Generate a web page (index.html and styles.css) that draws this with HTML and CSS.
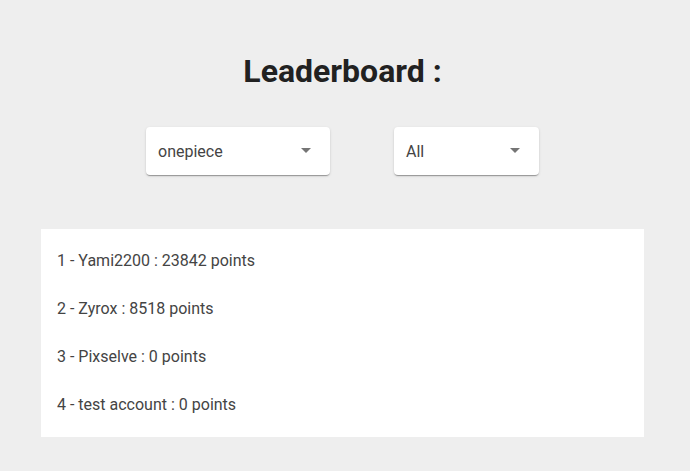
FILE: index.html
```html
<!DOCTYPE html>
<html>
<head>
<meta charset="utf-8">
<link rel="stylesheet" href="styles.css">
</head>
<body>
<div class="page">
  <h1 class="title">Leaderboard :</h1>
  <div class="filters">
    <div class="select select-anime">
      <span class="select-value">onepiece</span>
      <svg class="arrow" viewBox="0 0 24 24" width="24" height="24"><path d="M7 10l5 5 5-5z"/></svg>
    </div>
    <div class="select select-period">
      <span class="select-value">All</span>
      <svg class="arrow" viewBox="0 0 24 24" width="24" height="24"><path d="M7 10l5 5 5-5z"/></svg>
    </div>
  </div>
  <ul class="board">
    <li class="row">1 - Yami2200 : 23842 points</li>
    <li class="row">2 - Zyrox : 8518 points</li>
    <li class="row">3 - Pixselve : 0 points</li>
    <li class="row">4 - test account : 0 points</li>
  </ul>
</div>
</body>
</html>
```
FILE: styles.css
```css
html, body {
  margin: 0;
  padding: 0;
  background: #eeeeee;
  font-family: Roboto, "Liberation Sans", sans-serif;
}
.page {
  width: 685px;
  display: flex;
  flex-direction: column;
  align-items: center;
  padding-top: 53px;
}
.title {
  margin: 0;
  font-size: 32px;
  line-height: 37px;
  font-weight: 700;
  color: #212121;
}
.filters {
  display: flex;
  gap: 64px;
  margin-top: 37px;
}
.select {
  height: 48px;
  box-sizing: border-box;
  background: #fff;
  border-radius: 4px;
  box-shadow: 0 2px 1px -1px rgba(0,0,0,.2), 0 1px 1px 0 rgba(0,0,0,.14), 0 1px 3px 0 rgba(0,0,0,.12);
  display: flex;
  align-items: center;
  padding: 0 12px;
  justify-content: space-between;
}
.select-anime { width: 184px; }
.select-period { width: 145px; }
.select-value {
  font-size: 16px;
  color: #444;
}
.arrow {
  fill: rgba(0,0,0,0.54);
  margin-top: -2px;
}
.board {
  list-style: none;
  margin: 54px 0 0;
  padding: 8px 0;
  width: 603px;
  background: #fff;
}
.row {
  height: 48px;
  box-sizing: border-box;
  display: flex;
  align-items: center;
  padding-left: 16px;
  padding-bottom: 2px;
  font-size: 16px;
  color: #444;
}
```
